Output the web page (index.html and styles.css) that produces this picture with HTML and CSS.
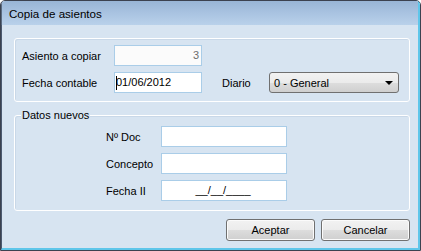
FILE: index.html
```html
<!DOCTYPE html>
<html>
<head>
<meta charset="utf-8">
<link rel="stylesheet" href="styles.css">
</head>
<body>
<div class="window">
  <div class="titlebar">Copia de asientos</div>
  <div class="content">
    <div class="group g1">
      <div class="row">
        <span class="lbl l1">Asiento a copiar</span>
        <div class="input ro">3</div>
      </div>
      <div class="row">
        <span class="lbl l1">Fecha contable</span>
        <div class="input"><span class="caret"></span>01/06/2012</div>
        <span class="lbl l2">Diario</span>
        <div class="select"><span>0 - General</span><span class="arrow"></span></div>
      </div>
    </div>
    <div class="group g2">
      <span class="gtitle">Datos nuevos</span>
      <div class="row">
        <span class="lbl l3">Nº Doc</span>
        <div class="input wide"></div>
      </div>
      <div class="row">
        <span class="lbl l3">Concepto</span>
        <div class="input wide"></div>
      </div>
      <div class="row">
        <span class="lbl l3">Fecha II</span>
        <div class="input wide center">__/__/____</div>
      </div>
    </div>
    <div class="buttons">
      <div class="btn">Aceptar</div>
      <div class="btn">Cancelar</div>
    </div>
  </div>
</div>
</body>
</html>
```
FILE: styles.css
```css
html, body {
  margin: 0;
  padding: 0;
  background: #ffffff;
}
body {
  font-family: "Liberation Sans", Arial, sans-serif;
  font-size: 11px;
  color: #000;
}
.window {
  width: 421px;
  height: 251px;
  box-sizing: border-box;
  border: 1px solid #3b4250;
  border-radius: 5px 5px 0 0;
  display: flex;
  flex-direction: column;
  overflow: hidden;
}
.titlebar {
  height: 24px;
  flex: none;
  box-sizing: border-box;
  padding-left: 7px;
  line-height: 26px;
  font-size: 11.6px;
  color: #000;
  background: linear-gradient(to bottom, #98b5d6 0%, #a9c3e1 50%, #b9d1ea 100%);
  border-right: 2px solid #5ec6ea;
  border-left: 1px solid #5b6b80;
}
.content {
  flex: 1;
  background: #d7e4f1;
  box-sizing: border-box;
  border-left: 1px solid #4c5a70;
  border-right: 2px solid #5ec6ea;
  border-bottom: 2px solid #5ec6ea;
  padding: 13px 8px 0 12px;
  display: flex;
  flex-direction: column;
}
.group {
  border: 1px solid #ffffff;
  border-radius: 3px;
  box-shadow: inset 1px 1px 0 #c9d8e8;
  position: relative;
  display: flex;
  flex-direction: column;
  gap: 6px;
}
.g1 {
  height: 64px;
  box-sizing: border-box;
  padding: 6px 0 0 7px;
}
.g2 {
  margin-top: 13px;
  height: 96px;
  box-sizing: border-box;
  padding: 10px 0 0 91px;
}
.gtitle {
  position: absolute;
  top: -7px;
  left: 6px;
  padding: 0 1px;
  line-height: 13px;
  background: #d7e4f1;
}
.row {
  display: flex;
  align-items: center;
  height: 21px;
}
.lbl {
  flex: none;
  white-space: nowrap;
}
.l1 { width: 92px; }
.l2 { width: 47px; margin-left: 20px; }
.l3 { width: 55px; }
.input {
  width: 88px;
  height: 21px;
  box-sizing: border-box;
  border: 1px solid #aacde8;
  background: #ffffff;
  padding: 0 2px 0 1px;
  line-height: 19px;
  white-space: nowrap;
  display: flex;
  align-items: center;
}
.input.ro {
  justify-content: flex-end;
  color: #6d6d6d;
  background: #fbfbfb;
}
.input.wide { width: 126px; }
.input.center { justify-content: center; padding-left: 0; }
.caret {
  display: inline-block;
  width: 1px;
  height: 14px;
  background: #000;
  margin-right: -1px;
  position: relative;
  z-index: 1;
}
.select {
  width: 130px;
  height: 21px;
  box-sizing: border-box;
  border: 1px solid #707070;
  border-radius: 3px;
  background: linear-gradient(to bottom, #f2f2f2 0%, #ebebeb 50%, #dddddd 51%, #cfcfcf 100%);
  display: flex;
  align-items: center;
  justify-content: space-between;
  padding: 0 5px 0 4px;
}
.arrow {
  width: 0;
  height: 0;
  border-left: 4px solid transparent;
  border-right: 4px solid transparent;
  border-top: 4px solid #000;
}
.buttons {
  margin-top: 8px;
  display: flex;
  justify-content: flex-end;
  gap: 6px;
}
.btn {
  width: 89px;
  height: 22px;
  box-sizing: border-box;
  border: 1px solid #707070;
  border-radius: 3px;
  background: linear-gradient(to bottom, #f2f2f2 0%, #ebebeb 50%, #dddddd 51%, #cfcfcf 100%);
  box-shadow: inset 0 0 0 1px #fbfbfb;
  display: flex;
  align-items: center;
  justify-content: center;
}
```
